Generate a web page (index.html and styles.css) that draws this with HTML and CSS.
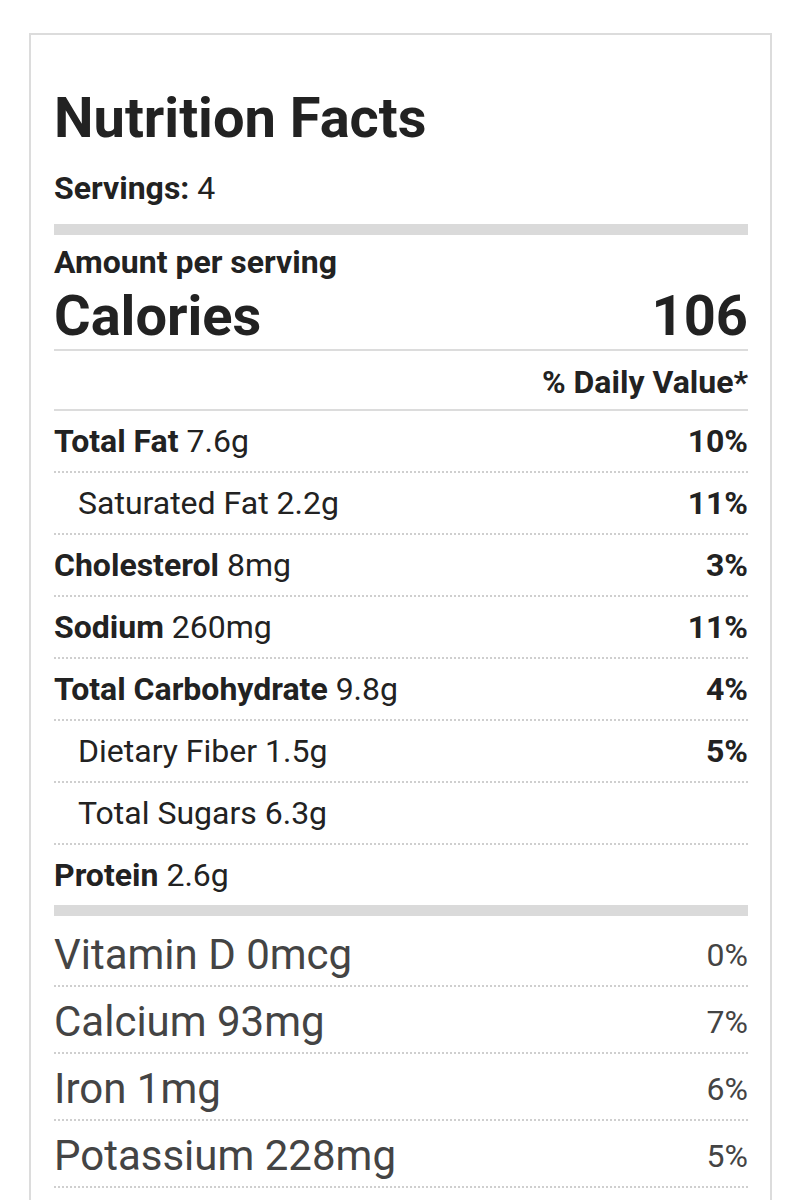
FILE: index.html
```html
<!DOCTYPE html>
<html lang="en">
<head>
<meta charset="utf-8">
<title>Nutrition Facts</title>
<link rel="stylesheet" href="styles.css">
</head>
<body>
<div class="label">
  <h1 class="title">Nutrition Facts</h1>
  <p class="servings"><b>Servings:</b> 4</p>
  <div class="bar"></div>
  <p class="amount">Amount per serving</p>
  <div class="calories"><span>Calories</span><span>106</span></div>
  <p class="dv">% Daily Value*</p>
  <div class="row"><span><b>Total Fat</b> 7.6g</span><b>10%</b></div>
  <div class="row sub"><span>Saturated Fat 2.2g</span><b>11%</b></div>
  <div class="row"><span><b>Cholesterol</b> 8mg</span><b>3%</b></div>
  <div class="row"><span><b>Sodium</b> 260mg</span><b>11%</b></div>
  <div class="row"><span><b>Total Carbohydrate</b> 9.8g</span><b>4%</b></div>
  <div class="row sub"><span>Dietary Fiber 1.5g</span><b>5%</b></div>
  <div class="row sub"><span>Total Sugars 6.3g</span></div>
  <div class="row last"><span><b>Protein</b> 2.6g</span></div>
  <div class="bar bar-flush"></div>
  <div class="vitamins">
    <div class="vit"><span>Vitamin D 0mcg</span><span class="pct">0%</span></div>
    <div class="vit"><span>Calcium 93mg</span><span class="pct">7%</span></div>
    <div class="vit"><span>Iron 1mg</span><span class="pct">6%</span></div>
    <div class="vit"><span>Potassium 228mg</span><span class="pct">5%</span></div>
  </div>
</div>
</body>
</html>
```

FILE: styles.css
```css
* { box-sizing: border-box; }

body {
  margin: 0;
  padding-top: 33px;
  background: #fff;
  font-family: Roboto, "Liberation Sans", sans-serif;
  color: #222;
}

.label {
  width: 743px;
  margin-left: 29px;
  border: 2px solid #dcdcdc;
  padding: 51px 22px 30px 23px;
}

.title {
  margin: 0 0 20px;
  font-size: 56px;
  line-height: 64px;
  font-weight: 700;
}

.servings {
  margin: 0;
  font-size: 32px;
  line-height: 36px;
}

.servings b { font-weight: 700; }

.bar {
  height: 11px;
  background: #dadada;
  margin-top: 18px;
}

.bar-flush { margin-top: 0; }

.amount {
  margin: 9px 0 0;
  font-size: 32px;
  line-height: 36px;
  font-weight: 700;
}

.calories {
  display: flex;
  justify-content: space-between;
  margin-top: 6px;
  padding-bottom: 3px;
  font-size: 56px;
  line-height: 60px;
  font-weight: 700;
  border-bottom: 2px solid #dcdcdc;
}

.dv {
  margin: 0;
  padding: 13px 0 9px;
  text-align: right;
  font-size: 32px;
  line-height: 36px;
  font-weight: 700;
  border-bottom: 2px solid #dcdcdc;
}

.row {
  display: flex;
  justify-content: space-between;
  padding: 12px 0;
  font-size: 32px;
  line-height: 36px;
  border-bottom: 2px dotted #cfcfcf;
}

.row b { font-weight: 700; }

.row.sub { padding-left: 24px; }

.row.last { border-bottom: none; }

.vitamins { padding-top: 4px; }

.vit {
  display: flex;
  justify-content: space-between;
  align-items: center;
  height: 67px;
  padding: 10px 0 6px;
  font-size: 42px;
  line-height: 49px;
  color: #444;
  border-bottom: 2px dotted #cfcfcf;
}

.vit .pct {
  font-size: 32px;
  line-height: 36px;
}
```
